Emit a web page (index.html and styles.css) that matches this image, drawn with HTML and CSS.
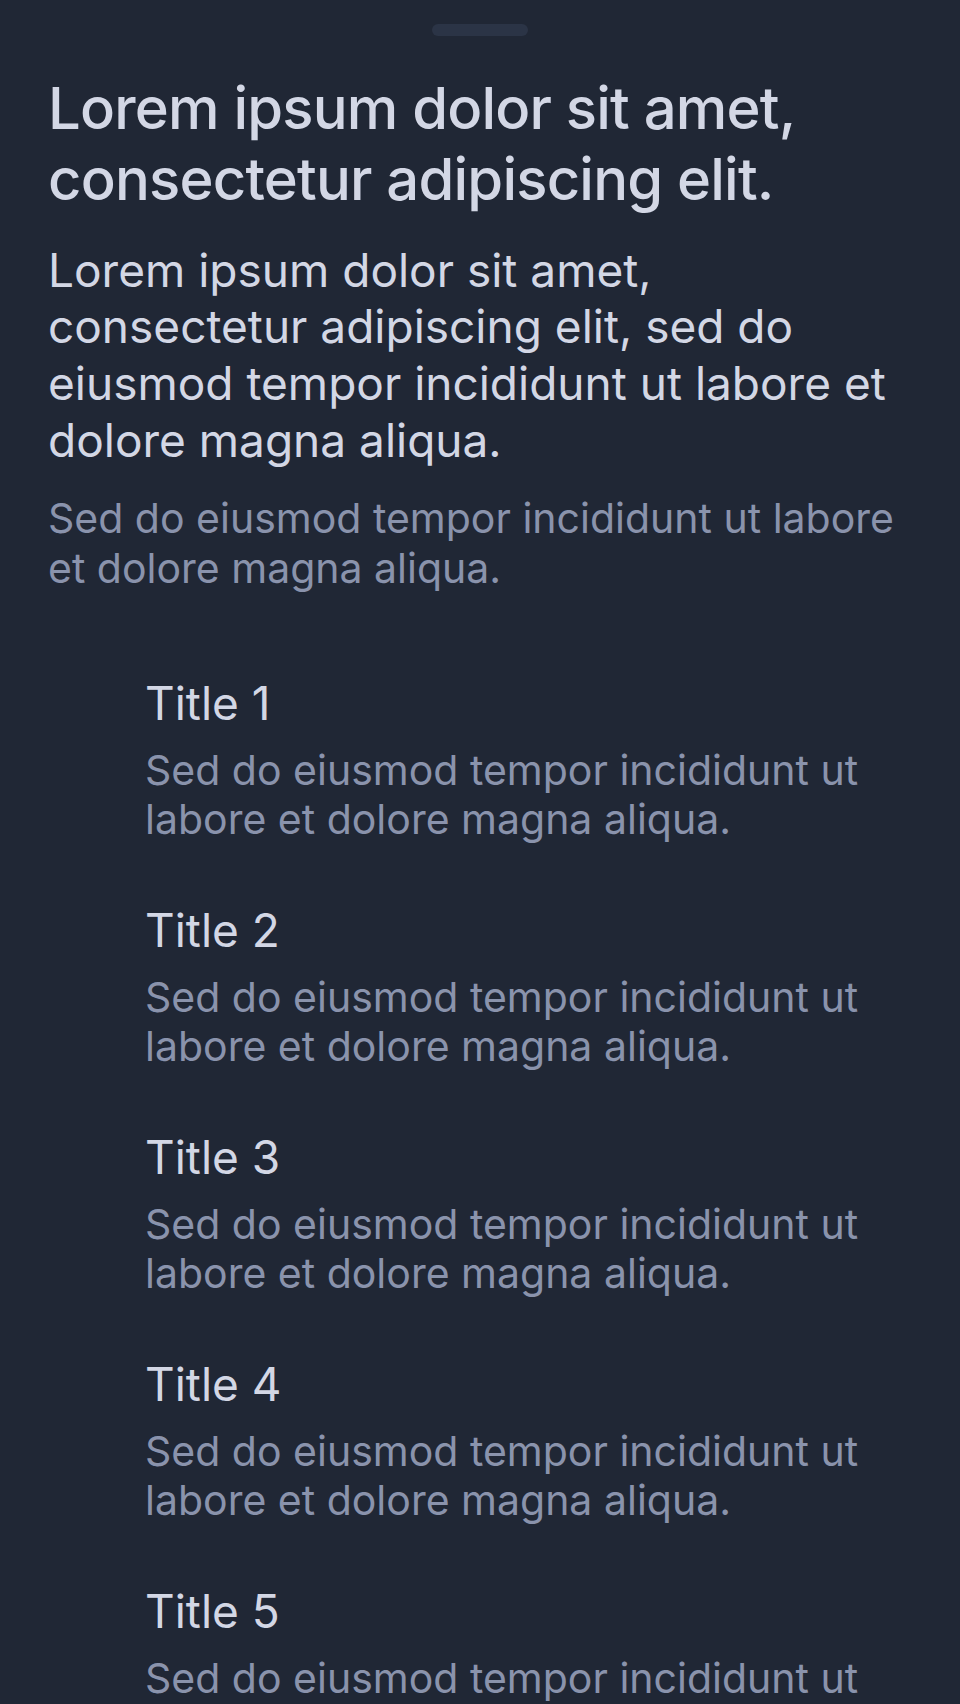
FILE: index.html
```html
<!DOCTYPE html>
<html lang="en">
<head>
<meta charset="utf-8">
<title>Sheet</title>
<link rel="stylesheet" href="styles.css">
</head>
<body>
<div class="sheet">
  <div class="handle"></div>
  <h1 class="heading">Lorem ipsum dolor sit amet, consectetur adipiscing elit.</h1>
  <p class="lead">Lorem ipsum dolor sit amet, consectetur adipiscing elit, sed do eiusmod tempor incididunt ut labore et dolore magna aliqua.</p>
  <p class="note">Sed do eiusmod tempor incididunt ut labore et dolore magna aliqua.</p>
  <ul class="list">
    <li class="item">
      <div class="item-title">Title 1</div>
      <div class="item-desc">Sed do eiusmod tempor incididunt ut labore et dolore magna aliqua.</div>
    </li>
    <li class="item">
      <div class="item-title">Title 2</div>
      <div class="item-desc">Sed do eiusmod tempor incididunt ut labore et dolore magna aliqua.</div>
    </li>
    <li class="item">
      <div class="item-title">Title 3</div>
      <div class="item-desc">Sed do eiusmod tempor incididunt ut labore et dolore magna aliqua.</div>
    </li>
    <li class="item">
      <div class="item-title">Title 4</div>
      <div class="item-desc">Sed do eiusmod tempor incididunt ut labore et dolore magna aliqua.</div>
    </li>
    <li class="item">
      <div class="item-title">Title 5</div>
      <div class="item-desc">Sed do eiusmod tempor incididunt ut labore et dolore magna aliqua.</div>
    </li>
  </ul>
</div>
</body>
</html>
```
FILE: styles.css
```css
html, body {
  margin: 0;
  padding: 0;
  background: #202735;
}
body {
  font-family: Inter, "Noto Sans", sans-serif;
  color: #d3d7e5;
  height: 1704px;
  overflow: hidden;
}
.sheet {
  display: flex;
  flex-direction: column;
  padding: 24px 48px 0 48px;
}
.handle {
  width: 96px;
  height: 12px;
  border-radius: 6px;
  background: #2b3446;
  align-self: center;
}
.heading {
  margin: 37.4px 0 0 0;
  font-size: 58px;
  font-weight: 500;
  letter-spacing: -0.8px;
  line-height: 71px;
  color: #d3d7e5;
}
.lead {
  margin: 26.4px 0 0 0;
  font-size: 46px;
  font-weight: 400;
  line-height: 56.7px;
  color: #d3d7e5;
}
.note {
  margin: 24.5px 0 0 0;
  font-size: 41px;
  font-weight: 400;
  line-height: 50px;
  color: #8a93ac;
}
.list {
  list-style: none;
  margin: 81.7px 0 0 0;
  padding: 0 0 0 97px;
  display: flex;
  flex-direction: column;
  gap: 58.2px;
}
.item {
  display: flex;
  flex-direction: column;
  gap: 13.8px;
}
.item-title {
  font-size: 46px;
  font-weight: 400;
  line-height: 57px;
  color: #d3d7e5;
}
.item-desc {
  font-size: 41px;
  font-weight: 400;
  line-height: 49px;
  color: #8a93ac;
}
```
